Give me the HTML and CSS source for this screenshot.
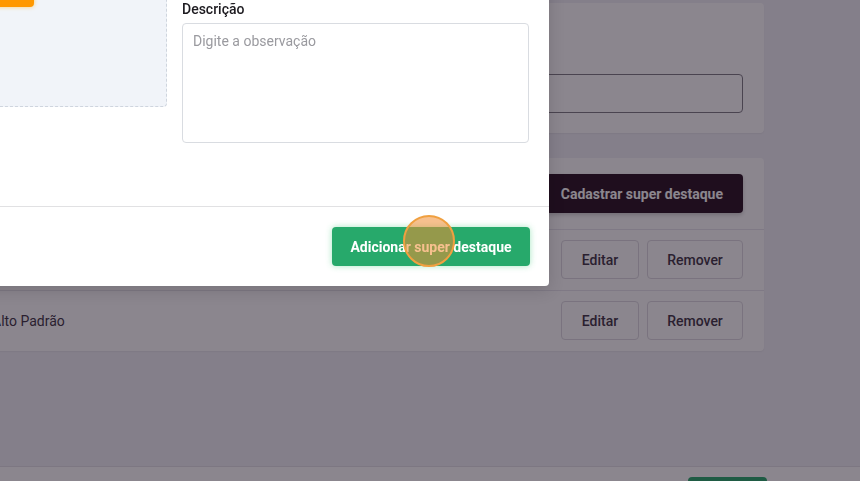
FILE: index.html
```html
<!DOCTYPE html>
<html lang="pt-BR">
<head>
  <meta charset="UTF-8">
  <title>Super destaques</title>
  <link rel="stylesheet" href="styles.css">
</head>
<body>
  <div class="page">
    <div class="card">
      <h2 class="card-title">Configurações</h2>
      <label class="card-label">Título da seção</label>
      <input class="card-input" type="text" value="">
    </div>

    <div class="card list">
      <div class="list-head">
        <button class="btn-dark">Cadastrar super destaque</button>
      </div>
      <div class="list-row">
        <span class="row-name">Lançamentos</span>
        <div class="row-actions">
          <button class="btn-light">Editar</button>
          <button class="btn-light wide">Remover</button>
        </div>
      </div>
      <div class="list-row">
        <span class="row-name">Alto Padrão</span>
        <div class="row-actions">
          <button class="btn-light">Editar</button>
          <button class="btn-light wide">Remover</button>
        </div>
      </div>
    </div>
  </div>

  <div class="footer">
    <button class="btn-save"></button>
  </div>

  <div class="backdrop"></div>

  <div class="modal">
    <div class="modal-body">
      <div class="upload">
        <span class="upload-text">Arraste uma imagem</span>
        <button class="btn-orange">Selecionar</button>
      </div>
      <div class="fields">
        <div class="field">
          <label>Título</label>
          <input type="text" placeholder="Digite o título">
        </div>
        <div class="field">
          <label>Descrição</label>
          <textarea placeholder="Digite a observação"></textarea>
        </div>
      </div>
    </div>
    <div class="modal-footer">
      <button class="btn-green">Adicionar super destaque</button>
      <span class="click-dot"></span>
    </div>
  </div>
</body>
</html>
```

FILE: styles.css
```css
html {
  overflow: hidden;
}
body {
  margin: 0;
  background: #f1f1f7;
  font-family: Roboto, "Noto Sans", sans-serif;
  font-size: 14px;
  color: #3d3343;
  overflow: hidden;
  height: 481px;
}
button {
  font-family: inherit;
  cursor: pointer;
}

/* page behind the modal */
.page {
  margin-left: -28px;
  width: 792px;
  padding-top: 3px;
}
.card {
  background: #fff;
  border-radius: 4px;
  box-shadow: 0 1px 2px rgba(0, 0, 0, 0.06);
}
.card:first-child {
  padding: 20px 21px;
}
.card-title {
  margin: 0 0 10px;
  font-size: 18px;
  line-height: 22px;
}
.card-label {
  display: block;
  line-height: 14px;
  margin-bottom: 5px;
}
.card-input {
  display: block;
  box-sizing: border-box;
  width: 100%;
  height: 39px;
  border: 1px solid #7d7b83;
  border-radius: 4px;
}
.list {
  margin-top: 25px;
}
.list-head {
  display: flex;
  justify-content: flex-end;
  padding: 16px 21px;
}
.btn-dark {
  height: 39px;
  padding: 0 20px 0 15px;
  border: none;
  border-radius: 4px;
  background: #270f1f;
  color: #fff;
  font-size: 14px;
  font-weight: 700;
  box-shadow: 0 2px 4px rgba(0, 0, 0, 0.2);
}
.list-row {
  display: flex;
  align-items: center;
  justify-content: space-between;
  border-top: 1px solid #e6e5ec;
  padding: 10px 21px 11px 20px;
}
.row-actions {
  display: flex;
  gap: 8px;
}
.btn-light {
  width: 78px;
  height: 39px;
  padding: 0;
  background: #fff;
  border: 1px solid #dcd9e0;
  border-radius: 4px;
  color: #3d3343;
  font-size: 14px;
  font-weight: 500;
}
.btn-light.wide {
  width: 96px;
}
.footer {
  margin-top: 115px;
  height: 15px;
  overflow: hidden;
  background: #fff;
  border-top: 1px solid #e2e1e7;
  padding: 10px 93px 0 0;
  display: flex;
  justify-content: flex-end;
}
.btn-save {
  flex: none;
  width: 79px;
  height: 36px;
  border: none;
  border-radius: 4px;
  background: #27a96b;
}

/* modal */
.backdrop {
  position: fixed;
  inset: 0;
  background: rgba(23, 13, 29, 0.5);
}
.modal {
  position: fixed;
  top: -91px;
  left: -200px;
  width: 749px;
  background: #fff;
  border-radius: 4px;
  box-shadow: 0 4px 16px rgba(0, 0, 0, 0.15);
}
.modal-body {
  display: grid;
  grid-template-columns: 347px 347px;
  gap: 15px;
  padding: 20px 20px 63px;
}
.upload {
  height: 178px;
  box-sizing: border-box;
  background: #f1f4f9;
  border: 1px dashed #cfd5de;
  border-radius: 4px;
  display: flex;
  flex-direction: column;
  align-items: center;
  padding-top: 15px;
}
.upload-text {
  line-height: 18px;
  color: #8a8f98;
}
.btn-orange {
  margin-top: 10px;
  width: 80px;
  height: 34px;
  border: none;
  border-radius: 4px;
  background: #ff9800;
  color: #fff;
  font-weight: 700;
  box-shadow: 0 0 4px rgba(255, 190, 60, 0.7);
}
.field {
  display: flex;
  flex-direction: column;
}
.field + .field {
  margin-top: 10px;
}
.field label {
  line-height: 18px;
  margin-bottom: 5px;
  font-weight: 500;
  color: #1d1b20;
}
.field input,
.field textarea {
  box-sizing: border-box;
  border: 1px solid #d9dce1;
  border-radius: 4px;
  font-family: inherit;
  font-size: 14px;
  color: #333;
}
.field input {
  height: 38px;
  padding: 0 10px;
}
.field textarea {
  height: 120px;
  padding: 9px 10px;
  resize: none;
}
.field input::placeholder,
.field textarea::placeholder {
  color: #9a9a9f;
}
.modal-footer {
  position: relative;
  display: flex;
  justify-content: flex-end;
  border-top: 1px solid #e1e1e3;
  padding: 20px 19px 20px;
}
.btn-green {
  width: 198px;
  height: 39px;
  border: none;
  border-radius: 4px;
  background: #27a96b;
  color: #fff;
  font-size: 14px;
  font-weight: 700;
  box-shadow: 0 0 6px rgba(60, 200, 120, 0.45);
}
.click-dot {
  position: absolute;
  left: 603px;
  top: 8px;
  width: 48px;
  height: 48px;
  border-radius: 50%;
  border: 2px solid #f0a040;
  background: rgba(240, 140, 50, 0.55);
}
```
